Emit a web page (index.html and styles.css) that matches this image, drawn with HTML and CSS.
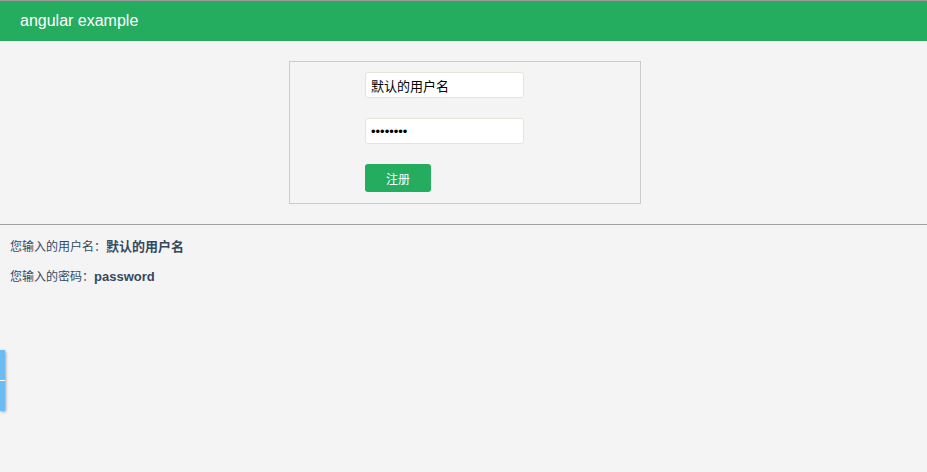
FILE: index.html
```html
<!DOCTYPE html>
<html lang="zh-CN">
<head>
    <meta charset="UTF-8">
    <meta name="viewport" content="width=device-width, initial-scale=1.0">
    <title>angular example</title>
    <link rel="stylesheet" href="styles.css">
</head>
<body>
    <div class="header">angular example</div>
    <div class="main">
        <form class="reg">
            <input type="text" class="field" value="默认的用户名">
            <input type="password" class="field pwd" value="password">
            <button type="button" class="btn">注册</button>
        </form>
    </div>
    <div class="line"></div>
    <div class="result">
        <p>您输入的用户名：<b>默认的用户名</b></p>
        <p>您输入的密码：<b>password</b></p>
    </div>
    <div class="side-tab"><span></span><span></span></div>
</body>
</html>
```

FILE: styles.css
```css
body{
    margin:0;
    background:#f4f4f4;
    font-family:"Liberation Sans","Noto Sans CJK SC",sans-serif;
    font-size:12px;
    color:#34495e;
}
.header{
    height:40px;
    line-height:40px;
    border-top:1px solid #9a9a9a;
    background:#24ac5f;
    color:#fff;
    font-family:"Liberation Sans","Noto Sans CJK SC",sans-serif;
    font-size:16px;
    padding-left:20px;
}
.main{
    padding:20px 0 0 3px;
    display:flex;
    justify-content:center;
}
.reg{
    width:275px;
    border:1px solid #cbcbcb;
    padding:10px 0 11px 75px;
    display:flex;
    flex-direction:column;
    align-items:flex-start;
    gap:20px;
}
.field{
    width:159px;
    height:26px;
    box-sizing:border-box;
    border:1px solid #e6e4da;
    border-radius:3px;
    background:#fff;
    padding:0 5px;
    font-family:"Noto Sans CJK SC",sans-serif;
    font-size:13px;
    color:#000;
    outline:none;
}
.pwd{
    font-family:"Liberation Sans",sans-serif;
    font-size:13px;
}
.btn{
    width:66px;
    height:28px;
    border:none;
    border-radius:3px;
    background:#24ac5f;
    color:#fff;
    font-family:"Noto Sans CJK SC",sans-serif;
    font-size:12px;
}
.line{
    margin-top:20px;
    border-top:1px solid #a0a0a0;
}
.result{
    padding:14px 10px;
}
.result p{
    margin:0 0 14px;
    line-height:16px;
}
.result b{
    font-weight:bold;
    font-size:13px;
}
.side-tab{
    position:fixed;
    left:0;
    top:350px;
    width:5px;
    height:61px;
    display:flex;
    flex-direction:column;
    gap:1px;
    background:#fff;
    box-shadow:1px 1px 3px rgba(0,0,0,0.35);
    border-radius:0 2px 2px 0;
}
.side-tab span{
    flex:1;
    background:#6cbcf4;
}
```
